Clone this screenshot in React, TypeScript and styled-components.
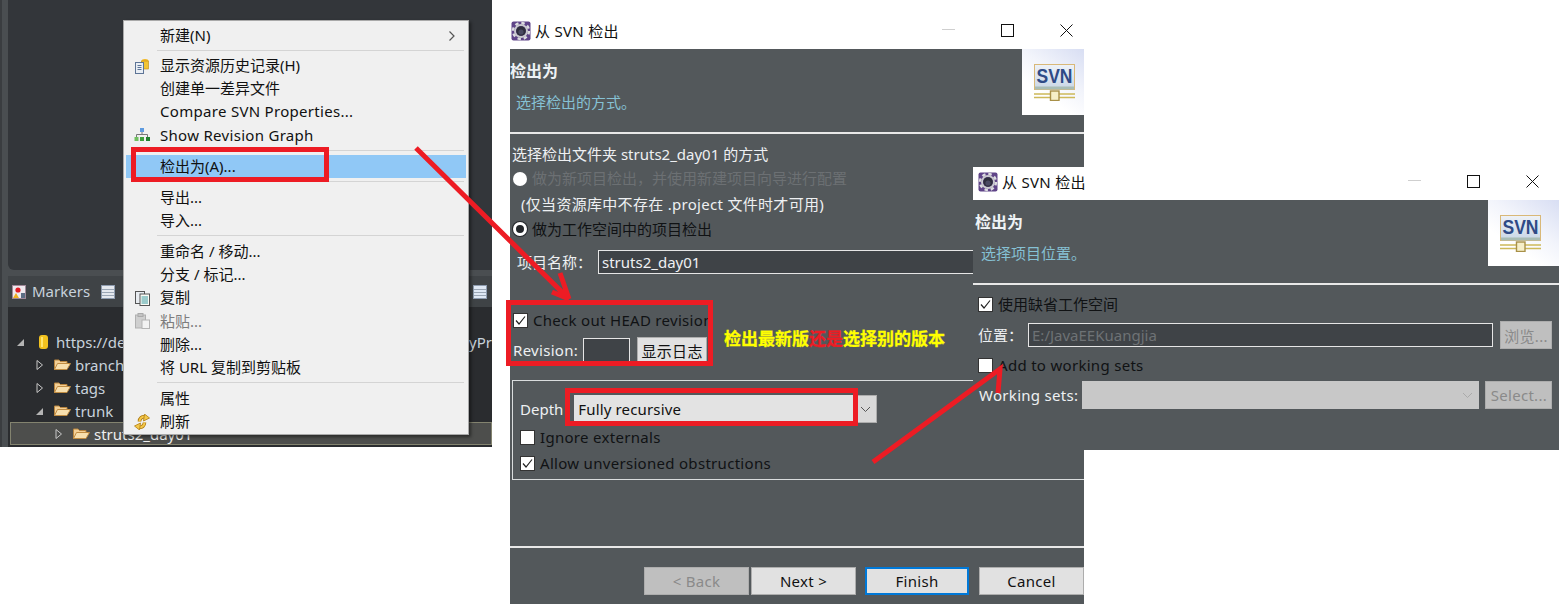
import React from 'react'
import styled, { createGlobalStyle } from 'styled-components'

const UI_FONT = `"Noto Sans", "Noto Sans CJK SC", "Open Sans", sans-serif`

const GlobalStyle = createGlobalStyle`
  html, body {
    margin: 0;
    padding: 0;
    background: #fff;
  }
  body {
    font-family: ${UI_FONT};
    font-size: 15px;
    color: #000;
  }
`

const Canvas = styled.div`
  position: relative;
  width: 1567px;
  height: 604px;
  overflow: hidden;
  background: #fff;
`

/* left screenshot: the IDE behind the context menu */
const Ide = styled.div`
  position: absolute;
  left: 0;
  top: 0;
  width: 492px;
  height: 447px;
  display: flex;
  flex-direction: column;
  overflow: hidden;
  background: #4a4e51;
  padding-left: 6px;
  box-sizing: border-box;
  border-left: 2px solid #3a3d40;
`

const EditorPane = styled.div`
  height: 270px;
  flex: none;
  background: #33363a;
  border-bottom-left-radius: 6px;
`

const ViewPane = styled.div`
  margin-top: 6px;
  flex: 1;
  display: flex;
  flex-direction: column;
  background: #2a2c2f;
  border-top-left-radius: 6px;
`

const ViewTabs = styled.div`
  height: 31px;
  flex: none;
  display: flex;
  align-items: center;
  background: #3f4346;
  color: #c8d2dc;
  position: relative;
`

const ViewTab = styled.span<{ $left: number }>`
  position: absolute;
  left: ${(p) => p.$left}px;
  display: flex;
  align-items: center;
  gap: 6px;
  line-height: 1;
`

const Tree = styled.div`
  display: flex;
  flex-direction: column;
  padding-top: 23px;
`

const TreeRow = styled.div<{ $depth: number; $selected?: boolean }>`
  height: 23px;
  display: flex;
  align-items: center;
  gap: 4px;
  padding-left: ${(p) => p.$depth}px;
  color: #c8d2dc;
  box-sizing: border-box;
  ${(p) =>
    p.$selected &&
    `
    margin-left: 2px;
    background: #4d4e4c;
    outline: 1px solid #83836f;
    outline-offset: -1px;
    color: #eee;
  `}
`

const TreeTail = styled.span`
  margin-left: auto;
`

const Twisty = styled.svg`
  width: 10px;
  height: 12px;
  flex: none;
  margin-right: 5px;
`

const RepoSvg = styled.svg`
  flex: none;
  margin: 0 4px;
`

const InlineSvg = styled.svg`
  flex: none;
`

/* context menu */
const Menu = styled.div`
  position: absolute;
  left: 123px;
  top: 20px;
  width: 346px;
  height: 415px;
  box-sizing: border-box;
  padding: 3px 2px;
  background: #f0f0f0;
  border: 1px solid #a9a9a9;
  box-shadow: 2px 2px 3px rgba(0, 0, 0, 0.45);
  display: flex;
  flex-direction: column;
  color: #111;
`

const MenuItem = styled.div<{ $active?: boolean; $disabled?: boolean; $latin?: boolean }>`
  height: 23.2px;
  flex: none;
  display: flex;
  align-items: center;
  position: relative;
  padding-left: 34px;
  line-height: 1;
  letter-spacing: ${(p) => (p.$latin ? '0.3px' : '0')};
  background: ${(p) => (p.$active ? '#90c8f6' : 'transparent')};
  color: ${(p) => (p.$disabled ? '#7d7d7d' : 'inherit')};
`

const MenuIcon = styled.span`
  position: absolute;
  left: 6px;
  top: 2px;
  width: 20px;
  height: 20px;
  display: flex;
  align-items: center;
  justify-content: center;
`

const MenuChevron = styled.svg`
  position: absolute;
  right: 10px;
  top: 6px;
  width: 8px;
  height: 12px;
`

const MenuSep = styled.div<{ $tight?: boolean }>`
  flex: none;
  height: 1px;
  margin: 3px 2px ${(p) => (p.$tight ? '2.7px' : '3.9px')} 31px;
  background: #d4d4d4;
`

/* dialogs */
const Dialog = styled.div<{ $left: number; $top: number; $width: number; $height: number }>`
  position: absolute;
  left: ${(p) => p.$left}px;
  top: ${(p) => p.$top}px;
  width: ${(p) => p.$width}px;
  height: ${(p) => p.$height}px;
  display: flex;
  flex-direction: column;
  overflow: hidden;
  background: #53585b;
`

const TitleBar = styled.div<{ $pl: number }>`
  height: 33px;
  flex: none;
  display: flex;
  align-items: center;
  box-sizing: border-box;
  padding: 0 0 4px ${(p) => p.$pl}px;
  background: #fff;
  color: #111;
  gap: 4px;
  white-space: nowrap;
`

const TitleText = styled.span`
  flex: 1;
  overflow: hidden;
  letter-spacing: 0.3px;
`

const WindowButtons = styled.div<{ $pr: number }>`
  flex: none;
  display: flex;
  align-items: center;
  gap: 46px;
  padding-right: ${(p) => p.$pr}px;
  background: #fff;
`

const WinIcon = styled.svg`
  width: 13px;
  height: 13px;
  display: block;
`

const BannerRow = styled.div`
  height: 85px;
  flex: none;
  display: flex;
  justify-content: space-between;
  align-items: flex-start;
  box-sizing: border-box;
  border-bottom: 2px solid #e8e8e8;
`

const BannerText = styled.div<{ $inset?: number }>`
  display: flex;
  flex-direction: column;
  padding: 10px 0 0 ${(p) => p.$inset ?? 0}px;
  gap: 8px;
`

const BannerTitle = styled.div`
  font-weight: 700;
  font-size: 16px;
  line-height: 24px;
  color: #eef2f5;
`

const BannerSub = styled.div`
  margin-left: 6px;
  line-height: 22px;
  color: #86c1d4;
`

const SvnBadge = styled.div<{ $width: number; $pr: number }>`
  width: ${(p) => p.$width}px;
  height: 66px;
  flex: none;
  box-sizing: border-box;
  padding-right: ${(p) => p.$pr}px;
  background: linear-gradient(215deg, #d8def3 0%, #f2f4fb 40%, #fff 68%);
  display: flex;
  align-items: center;
  justify-content: flex-end;
`

const DialogBody = styled.div`
  flex: 1;
  display: flex;
  flex-direction: column;
  position: relative;
`

const Row = styled.div<{ $h: number; $pl: number; $gap?: number; $mt?: number }>`
  height: ${(p) => p.$h}px;
  flex: none;
  display: flex;
  align-items: center;
  padding-left: ${(p) => p.$pl}px;
  gap: ${(p) => p.$gap ?? 5}px;
  margin-top: ${(p) => p.$mt ?? 0}px;
  white-space: nowrap;
`

const Label = styled.span<{ $tone?: 'light' | 'dark' | 'muted'; $latin?: boolean }>`
  flex: none;
  line-height: 1;
  letter-spacing: ${(p) => (p.$latin ? '0.3px' : '0')};
  color: ${(p) => (p.$tone === 'dark' ? '#101214' : p.$tone === 'muted' ? '#6c7073' : '#eef0f2')};
`

const Radio = styled.span<{ $checked?: boolean }>`
  width: 14px;
  height: 14px;
  flex: none;
  border-radius: 50%;
  background: #fff;
  box-sizing: border-box;
  ${(p) => p.$checked && `border: 3px solid #fff; background: #23262a; box-shadow: 0 0 0 1px #23262a;`}
`

const CheckBox = styled.span`
  width: 15px;
  height: 15px;
  flex: none;
  box-sizing: border-box;
  background: #fff;
  border: 1px solid #333;
  display: flex;
  align-items: center;
  justify-content: center;
`

const TextField = styled.div<{ $width: number; $muted?: boolean }>`
  width: ${(p) => p.$width}px;
  height: 24px;
  flex: none;
  box-sizing: border-box;
  display: flex;
  align-items: center;
  padding-left: 3px;
  background: #3f4347;
  border: 1px solid #e6e6e6;
  color: ${(p) => (p.$muted ? '#6e7275' : '#eef0f2')};
`

const PushButton = styled.div<{
  $width: number
  $height?: number
  $ml?: number
  $variant?: 'default' | 'disabled' | 'primary'
}>`
  width: ${(p) => p.$width}px;
  height: ${(p) => p.$height ?? 28}px;
  margin-left: ${(p) => p.$ml ?? 0}px;
  flex: none;
  box-sizing: border-box;
  display: flex;
  align-items: center;
  justify-content: center;
  letter-spacing: 0.3px;
  background: ${(p) => (p.$variant === 'disabled' ? '#bfbfbf' : '#e1e1e1')};
  color: ${(p) => (p.$variant === 'disabled' ? '#8a8a8a' : '#111')};
  border: ${(p) => (p.$variant === 'primary' ? '2px solid #0078d7' : '1px solid #adadad')};
`

const GroupBox = styled.div`
  margin: 17px 0 0 2px;
  width: 600px;
  height: 100px;
  flex: none;
  box-sizing: border-box;
  border: 1px solid #d9dcdd;
  display: flex;
  flex-direction: column;
  padding-top: 14px;
`

const ComboField = styled.div<{ $width: number; $disabled?: boolean }>`
  width: ${(p) => p.$width}px;
  height: 28px;
  flex: none;
  box-sizing: border-box;
  display: flex;
  align-items: center;
  justify-content: ${(p) => (p.$disabled ? 'flex-end' : 'flex-start')};
  padding: ${(p) => (p.$disabled ? '0 6px 0 0' : '0 0 0 4px')};
  letter-spacing: 0.15px;
  background: ${(p) => (p.$disabled ? '#c8c8c8' : '#e3e3e3')};
  color: #111;
`

const ComboArrow = styled.span`
  width: 23px;
  height: 28px;
  flex: none;
  margin-left: -10px;
  display: flex;
  align-items: center;
  justify-content: center;
  background: #d9d9d9;
  border: 1px solid #adadad;
  box-sizing: border-box;
`

const WizardRule = styled.div<{ $mt: number }>`
  height: 2px;
  flex: none;
  margin-top: ${(p) => p.$mt}px;
  background: #e8e8e8;
`

const WizardButtons = styled.div`
  display: flex;
  padding: 19px 0 0 134px;
  gap: 2px;
`

/* annotations lying over the screenshots */
const RedBox = styled.div<{ $left: number; $top: number; $width: number; $height: number }>`
  position: absolute;
  left: ${(p) => p.$left}px;
  top: ${(p) => p.$top}px;
  width: ${(p) => p.$width}px;
  height: ${(p) => p.$height}px;
  box-sizing: border-box;
  border: 5px solid #ed1c24;
`

const Note = styled.div`
  position: absolute;
  left: 724px;
  top: 326px;
  font-family: "Noto Sans CJK SC", sans-serif;
  font-size: 17px;
  line-height: 24px;
  font-weight: 700;
  -webkit-text-stroke: 0.3px currentColor;
  color: #ffff00;
  white-space: nowrap;
`

const NoteRed = styled.span`
  color: #ed1c24;
`

const ArrowLayer = styled.svg`
  position: absolute;
  left: 0;
  top: 0;
  width: 1567px;
  height: 604px;
  pointer-events: none;
`

const AppIcon = () => (
  <InlineSvg width="20" height="20" viewBox="0 0 20 20">
    <rect x="0.5" y="0.5" width="19" height="19" rx="2" fill="#5f4488" />
    <circle cx="10" cy="10" r="8" fill="none" stroke="#dcdce0" strokeWidth="2.4" strokeDasharray="3.4 2.9" />
    <circle cx="10" cy="10" r="6" fill="none" stroke="#c9c9ce" strokeWidth="2" />
    <circle cx="10" cy="10" r="4.8" fill="#2e2e3c" />
    <circle cx="10" cy="11" r="2.6" fill="#4a4a62" />
  </InlineSvg>
)

const SvnLogo = () => (
  <svg width="42" height="37" viewBox="0 0 42 37">
    <defs>
      <linearGradient id="svn-plate" x1="0" y1="0" x2="0" y2="1">
        <stop offset="0" stopColor="#eef2f8" />
        <stop offset="1" stopColor="#c9d6e6" />
      </linearGradient>
    </defs>
    <rect x="0.5" y="0.5" width="40" height="25" fill="url(#svn-plate)" stroke="#d9b878" />
    <rect x="1" y="22.5" width="39" height="3" fill="#a9bdb6" />
    <text
      x="20.5"
      y="19"
      textAnchor="middle"
      textLength="36"
      lengthAdjust="spacingAndGlyphs"
      fontFamily="Liberation Sans, sans-serif"
      fontWeight="700"
      fontSize="20"
      fill="#2f4a86"
    >
      SVN
    </text>
    <path d="M0 30 H41 M0 33.5 H41" stroke="#cdb95a" strokeWidth="1.6" />
    <rect x="16.5" y="27" width="8.5" height="9.5" fill="#f6efc8" stroke="#a89048" strokeWidth="1.4" />
  </svg>
)

const Check = () => (
  <svg width="11" height="11" viewBox="0 0 11 11">
    <path d="M1 5.5 L4 9 L10 1.5" fill="none" stroke="#222" strokeWidth="1.2" />
  </svg>
)

const Chevron = ({ color = '#555' }: { color?: string }) => (
  <svg width="11" height="7" viewBox="0 0 11 7">
    <path d="M1 1 L5.5 5.5 L10 1" fill="none" stroke={color} strokeWidth="1" />
  </svg>
)

const WindowControls = ({ inset }: { inset: number }) => (
  <WindowButtons $pr={inset}>
    <WinIcon viewBox="0 0 13 13">
      <path d="M0 5.5 H13" stroke="#cfcfcf" strokeWidth="1" />
    </WinIcon>
    <WinIcon viewBox="0 0 13 13">
      <rect x="0.5" y="0.5" width="12" height="12" fill="none" stroke="#111" />
    </WinIcon>
    <WinIcon viewBox="0 0 13 13">
      <path d="M0.5 0.5 L12.5 12.5 M12.5 0.5 L0.5 12.5" stroke="#111" />
    </WinIcon>
  </WindowButtons>
)

const Folder = () => (
  <InlineSvg width="17" height="13" viewBox="0 0 17 13">
    <path d="M0.5 11.5 V2 H5 L6.5 3.5 H13 V6" fill="#f3cf95" stroke="#b8853f" />
    <path d="M0.5 11.5 L3.5 5.5 H16.5 L13 11.5 Z" fill="#f7dfae" stroke="#c08c42" />
  </InlineSvg>
)

const TwistyOpen = () => (
  <Twisty viewBox="0 0 10 12">
    <path d="M1 10 L8 10 L8 3 Z" fill="#b4b4b4" />
  </Twisty>
)

const TwistyClosed = () => (
  <Twisty viewBox="0 0 10 12">
    <path d="M2 1.5 L7.5 6 L2 10.5 Z" fill="none" stroke="#c8c8c8" />
  </Twisty>
)

const HistoryIcon = () => (
  <svg width="14" height="16" viewBox="0 0 14 16">
    <ellipse cx="10" cy="3" rx="3.5" ry="2" fill="#f2b824" />
    <rect x="6.5" y="3" width="7" height="8" fill="#f2c434" stroke="#c08a10" strokeWidth="0.6" />
    <rect x="0.5" y="4.5" width="8" height="11" fill="#e9eef4" stroke="#5d7496" />
    <path d="M2.5 7.5 H6.5 M2.5 9.5 H6.5 M2.5 11.5 H6.5" stroke="#5d7496" />
  </svg>
)

const GraphIcon = () => (
  <svg width="17" height="14" viewBox="0 0 17 14">
    <rect x="6" y="0" width="4" height="4" fill="#5e9be0" />
    <path d="M8 4 V6.5 M2.5 9 V6.5 H13.5 V9" fill="none" stroke="#777" />
    <rect x="0.5" y="9" width="4" height="4" fill="#6fbf5e" />
    <rect x="6" y="9" width="4" height="4" fill="#3f9f3f" />
    <rect x="12" y="9" width="4" height="4" fill="#1f7f2f" />
  </svg>
)

const CopyIcon = () => (
  <svg width="15" height="15" viewBox="0 0 15 15">
    <rect x="0.5" y="0.5" width="9" height="12" fill="#e8ecf0" stroke="#555" />
    <rect x="5" y="3" width="9.5" height="11.5" fill="#fbfbf4" stroke="#555" />
    <path d="M6.5 6 H13 M6.5 8 H13 M6.5 10 H13 M6.5 12 H13" stroke="#3a9aa0" />
  </svg>
)

const PasteIcon = () => (
  <svg width="15" height="16" viewBox="0 0 15 16">
    <rect x="0.5" y="2" width="10" height="13" fill="#cfcfcf" stroke="#b0b0b0" />
    <rect x="3" y="0.5" width="5" height="3" fill="#c4c4c4" stroke="#aaa" />
    <rect x="7" y="7" width="7.5" height="8.5" fill="#f2f2f2" stroke="#b4b4b4" />
  </svg>
)

const RefreshIcon = () => (
  <svg width="16" height="16" viewBox="0 0 16 16">
    <path d="M5.5 7.5 C5.5 4.5 8 2 11.5 3" fill="none" stroke="#b07c10" strokeWidth="3.6" />
    <path d="M5.5 7.5 C5.5 4.5 8 2 11.5 3" fill="none" stroke="#f4c84a" strokeWidth="2" />
    <path d="M10.5 0 L15.5 4 L9.5 7 Z" fill="#f4c84a" stroke="#b07c10" strokeWidth="0.8" />
    <path d="M10.5 8.5 C10.5 11.5 8 14 4.5 13" fill="none" stroke="#b07c10" strokeWidth="3.6" />
    <path d="M10.5 8.5 C10.5 11.5 8 14 4.5 13" fill="none" stroke="#f4c84a" strokeWidth="2" />
    <path d="M5.5 16 L0.5 12 L6.5 9 Z" fill="#f4c84a" stroke="#b07c10" strokeWidth="0.8" />
  </svg>
)

const RepoIcon = () => (
  <RepoSvg width="9" height="14" viewBox="0 0 9 14">
    <rect x="0" y="0" width="9" height="14" rx="3" fill="#f2c21f" />
    <rect x="2" y="2" width="2" height="10" fill="#ffe56e" />
  </RepoSvg>
)

const TabGlyph = ({ fill }: { fill: string }) => (
  <svg width="14" height="14" viewBox="0 0 14 14">
    <rect x="0.5" y="0.5" width="13" height="13" fill={fill} stroke="#8d9bae" />
    <path d="M1 4.5 H13 M1 7.5 H13 M1 10.5 H13" stroke="#9aa6b4" />
  </svg>
)

const MarkersGlyph = () => (
  <svg width="14" height="14" viewBox="0 0 14 14">
    <rect x="0.5" y="0.5" width="13" height="13" fill="#efe9ee" stroke="#a08898" />
    <circle cx="6" cy="5" r="2.6" fill="#e01c24" />
    <path d="M1 13 L4 8 L7 13 Z" fill="#f0b020" />
    <rect x="9" y="8" width="4" height="5" fill="#5c6d84" />
  </svg>
)

export default function App() {
  return (
    <Canvas>
      <GlobalStyle />

      <Ide>
        <EditorPane />
        <ViewPane>
          <ViewTabs>
            <ViewTab $left={4}>
              <MarkersGlyph />
              Markers
            </ViewTab>
            <ViewTab $left={93}>
              <TabGlyph fill="#e4e8ee" />
            </ViewTab>
            <ViewTab $left={465}>
              <TabGlyph fill="#dfe8f4" />
              S
            </ViewTab>
          </ViewTabs>
          <Tree>
            <TreeRow $depth={8}>
              <TwistyOpen />
              <RepoIcon />
              https://de
              <TreeTail>yPr</TreeTail>
            </TreeRow>
            <TreeRow $depth={27}>
              <TwistyClosed />
              <Folder />
              branches
            </TreeRow>
            <TreeRow $depth={27}>
              <TwistyClosed />
              <Folder />
              tags
            </TreeRow>
            <TreeRow $depth={27}>
              <TwistyOpen />
              <Folder />
              trunk
            </TreeRow>
            <TreeRow $depth={44} $selected>
              <TwistyClosed />
              <Folder />
              struts2_day01
            </TreeRow>
          </Tree>
        </ViewPane>
      </Ide>

      <Menu>
        <MenuItem>
          新建(N)
          <MenuChevron viewBox="0 0 8 12">
            <path d="M1.5 1.5 L6 6 L1.5 10.5" fill="none" stroke="#555" strokeWidth="1.2" />
          </MenuChevron>
        </MenuItem>
        <MenuSep $tight />
        <MenuItem>
          <MenuIcon>
            <HistoryIcon />
          </MenuIcon>
          显示资源历史记录(H)
        </MenuItem>
        <MenuItem>创建单一差异文件</MenuItem>
        <MenuItem $latin>Compare SVN Properties...</MenuItem>
        <MenuItem $latin>
          <MenuIcon>
            <GraphIcon />
          </MenuIcon>
          Show Revision Graph
        </MenuItem>
        <MenuSep />
        <MenuItem $active>检出为(A)...</MenuItem>
        <MenuSep />
        <MenuItem>导出...</MenuItem>
        <MenuItem>导入...</MenuItem>
        <MenuSep />
        <MenuItem>重命名 / 移动...</MenuItem>
        <MenuItem>分支 / 标记...</MenuItem>
        <MenuItem>
          <MenuIcon>
            <CopyIcon />
          </MenuIcon>
          复制
        </MenuItem>
        <MenuItem $disabled>
          <MenuIcon>
            <PasteIcon />
          </MenuIcon>
          粘贴...
        </MenuItem>
        <MenuItem>删除...</MenuItem>
        <MenuItem>将 URL 复制到剪贴板</MenuItem>
        <MenuSep />
        <MenuItem>属性</MenuItem>
        <MenuItem>
          <MenuIcon>
            <RefreshIcon />
          </MenuIcon>
          刷新
        </MenuItem>
      </Menu>

      <Dialog $left={510} $top={16} $width={574} $height={588}>
        <TitleBar $pl={1}>
          <AppIcon />
          <TitleText>从 SVN 检出</TitleText>
          <WindowControls inset={11} />
        </TitleBar>
        <BannerRow>
          <BannerText>
            <BannerTitle>检出为</BannerTitle>
            <BannerSub>选择检出的方式。</BannerSub>
          </BannerText>
          <SvnBadge $width={62} $pr={8}>
            <SvnLogo />
          </SvnBadge>
        </BannerRow>
        <DialogBody>
          <Row $h={24} $pl={2} $mt={8}>
            <Label>选择检出文件夹 struts2_day01 的方式</Label>
          </Row>
          <Row $h={25} $pl={3}>
            <Radio />
            <Label $tone="muted">做为新项目检出，并使用新建项目向导进行配置</Label>
          </Row>
          <Row $h={26} $pl={11}>
            <Label $latin>(仅当资源库中不存在 .project 文件时才可用)</Label>
          </Row>
          <Row $h={24} $pl={3}>
            <Radio $checked />
            <Label $tone="dark">做为工作空间中的项目检出</Label>
          </Row>
          <Row $h={24} $pl={7} $gap={6} $mt={9}>
            <Label>项目名称：</Label>
            <TextField $width={480}>struts2_day01</TextField>
          </Row>
          <Row $h={24} $pl={3} $mt={34}>
            <CheckBox>
              <Check />
            </CheckBox>
            <Label $tone="dark" $latin>
              Check out HEAD revision
            </Label>
          </Row>
          <Row $h={26} $pl={3} $gap={5} $mt={5}>
            <Label $latin>Revision:</Label>
            <TextField $width={47} />
            <PushButton $width={70} $height={26} $ml={2}>
              显示日志
            </PushButton>
          </Row>
          <GroupBox>
            <Row $h={28} $pl={7} $gap={11}>
              <Label>Depth</Label>
              <ComboField $width={279}>Fully recursive</ComboField>
              <ComboArrow>
                <Chevron />
              </ComboArrow>
            </Row>
            <Row $h={25} $pl={7} $mt={2}>
              <CheckBox />
              <Label $tone="dark" $latin>
                Ignore externals
              </Label>
            </Row>
            <Row $h={25} $pl={7} $mt={1}>
              <CheckBox>
                <Check />
              </CheckBox>
              <Label $tone="dark" $latin>
                Allow unversioned obstructions
              </Label>
            </Row>
          </GroupBox>
          <WizardRule $mt={66} />
          <WizardButtons>
            <PushButton $width={105} $variant="disabled">
              &lt; Back
            </PushButton>
            <PushButton $width={105}>Next &gt;</PushButton>
            <PushButton $width={104} $variant="primary" $ml={7}>
              Finish
            </PushButton>
            <PushButton $width={105} $ml={8}>
              Cancel
            </PushButton>
          </WizardButtons>
        </DialogBody>
      </Dialog>

      <Dialog $left={973} $top={167} $width={586} $height={283}>
        <TitleBar $pl={5}>
          <AppIcon />
          <TitleText>从 SVN 检出</TitleText>
          <WindowControls inset={20} />
        </TitleBar>
        <BannerRow>
          <BannerText $inset={2}>
            <BannerTitle>检出为</BannerTitle>
            <BannerSub>选择项目位置。</BannerSub>
          </BannerText>
          <SvnBadge $width={71} $pr={17}>
            <SvnLogo />
          </SvnBadge>
        </BannerRow>
        <DialogBody>
          <Row $h={24} $pl={5} $mt={7}>
            <CheckBox>
              <Check />
            </CheckBox>
            <Label $tone="dark">使用缺省工作空间</Label>
          </Row>
          <Row $h={28} $pl={5} $gap={5} $mt={5}>
            <Label>位置：</Label>
            <TextField $width={465} $muted>
              E:/JavaEEKuangjia
            </TextField>
            <PushButton $width={52} $variant="disabled" $ml={2}>
              浏览...
            </PushButton>
          </Row>
          <Row $h={24} $pl={5} $gap={5} $mt={4}>
            <CheckBox />
            <Label $tone="dark" $latin>
              Add to working sets
            </Label>
          </Row>
          <Row $h={28} $pl={6} $gap={4} $mt={4}>
            <Label $latin>Working sets:</Label>
            <ComboField $width={397} $disabled>
              <Chevron color="#aaa" />
            </ComboField>
            <PushButton $width={67} $variant="disabled" $ml={2}>
              Select...
            </PushButton>
          </Row>
        </DialogBody>
      </Dialog>

      <RedBox $left={131} $top={147} $width={198} $height={35} />
      <RedBox $left={506} $top={300} $width={207} $height={66} />
      <RedBox $left={565} $top={388} $width={293} $height={38} />

      <Note>
        检出最新版<NoteRed>还是</NoteRed>选择别的版本
      </Note>

      <ArrowLayer viewBox="0 0 1567 604">
        <path
          d="M416 148 L569 299 M569 299 L560 273 M569 299 L552 292"
          fill="none"
          stroke="#ed1c24"
          strokeWidth="5"
        />
        <path d="M873 462 L1000 369 L998 393" fill="none" stroke="#ed1c24" strokeWidth="5" />
      </ArrowLayer>
    </Canvas>
  )
}
